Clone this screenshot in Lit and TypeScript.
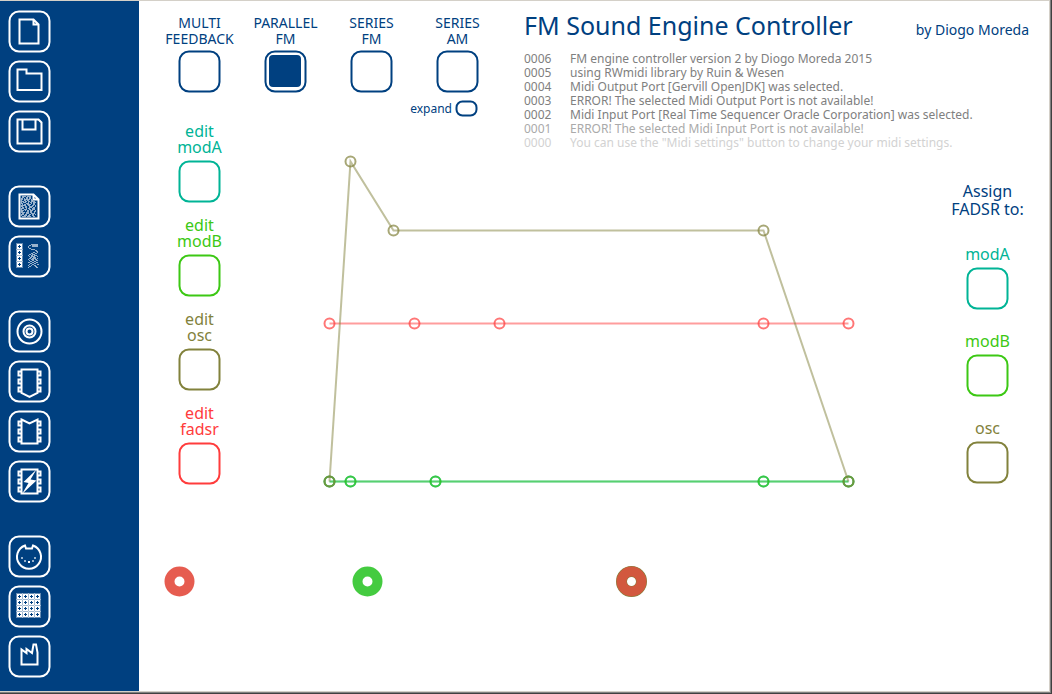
import { LitElement, html, svg, css, type TemplateResult, type SVGTemplateResult } from "lit";
import { customElement, property, state } from "lit/decorators.js";
import { classMap } from "lit/directives/class-map.js";

type Glyph = SVGTemplateResult | SVGTemplateResult[];

const pins = [11.5, 19.5, 27.5].map(
  (y) => svg`<path d="M13.5 ${y}H10.5v4h3M29.5 ${y}h3v4h-3" />`
);

const padCell = (x: number, y: number) =>
  svg`<path class="solid" fill-rule="evenodd"
    d="M${x} ${y}h5v5h-5zM${x + 2} ${y + 1}v1h-1v1h1v1h1v-1h1v-1h-1v-1z" />
    <rect class="seam" x=${x - 0.5} y=${y - 0.5} width="6" height="6" />`;

const bitmap = (rows: string[], x: number, y: number) =>
  rows.flatMap((row, r) =>
    [...row].map((c, i) =>
      c === "#" ? svg`<rect class="bit" x=${x + i} y=${y + r} width="1" height="1" />` : svg``
    )
  );

const noiseRows = [
  ".####.####.....",
  ".##..##.##.....",
  "##.#.##.##.....",
  "##.######.#....",
  "#..##.##..##...",
  "###.##.##.####.",
  "#.###..#.##.###",
  "##...###..#.##.",
  ".#.##.####..##.",
  "#####..##..##.#",
  "##..##..####..#",
  ".##.##..###.##.",
  "###..#.##..###.",
  "#..###..##.###.",
  "###.#.##.###..#",
  "##....##.##..##",
  "####.###.##..#.",
  ".##..###..####.",
  "###.##..##.##.#",
  "#..###.##..##..",
  ".####.####..##.",
];

const waveRows = [
  "...#######.",
  ".##.######.",
  "#...######.",
  "#..........",
  ".##........",
  "...####....",
  ".......##..",
  "........##.",
  ".....##..#.",
  "...##..##..",
  ".##.###....",
  "#..##.###..",
  ".#.####..#.",
  "..##.###...",
  ".##.####.#.",
  "#..###.##..",
  ".#..##..##.",
  "..##..##...",
  "##..##..##.",
  "..##..##...",
  ".#..##...##",
  "#..#..##...",
  ".##....##..",
  "#.......##.",
];

const sheet = svg`<path d="M11.5 9.5H25.5L30.5 14.5V33.5H11.5ZM25.5 9.5V14.5H30.5" />`;

const glyphs: Record<string, Glyph> = {
  blank: svg``,
  sheet,
  folder: svg`<path d="M9.5 30V9.5H18.5V13.5H33.5V30Z" />`,
  floppy: svg`<path d="M9.5 9.5H30.5L33.5 12.5V33.5H9.5ZM14.5 9.5V19.5H27.5V9.5" />`,
  random: [sheet, ...bitmap(noiseRows, 13, 11)],
  randomPads: [...[0, 1, 2, 3].map((i) => padCell(9, 9 + i * 6)), ...bitmap(waveRows, 20, 9)],
  disc: svg`<circle cx="21.5" cy="21.5" r="12" /><circle cx="21.5" cy="21.5" r="6" /><circle cx="21.5" cy="21.5" r="3" />`,
  chipIn: [svg`<path d="M13.5 9.5H29.5V33L21.5 37L13.5 33Z" />`, ...pins],
  chipOut: [svg`<path d="M13.5 9.5L21.5 13.5L29.5 9.5V33.5H13.5Z" />`, ...pins],
  chipBolt: [
    svg`<path d="M13.5 9.5H29.5V33.5H13.5Z" />
      <path class="solid" d="M28.5 9.5L15.5 22L20.5 23L14 34L28.5 20.5L22.5 19.5Z" />`,
    ...pins,
  ],
  din: svg`<path d="M17 10.5A12 12 0 1 0 25 10.5L24 13.5H18Z" />
    ${[[13, 22], [16, 25], [20, 26], [24, 25], [26, 22]].map(
      ([x, y]) => svg`<rect class=${x === 20 ? "solid" : "bit"} x=${x} y=${y} width="2" height="2" />`
    )}`,
  pads: [0, 1, 2, 3].flatMap((r) => [0, 1, 2, 3].map((c) => padCell(9 + c * 6, 9 + r * 6))),
  factory: svg`<path d="M13.5 29.5V14.5L18.5 18V14L24 18L25.5 9.5H28L29.5 17.5V29.5Z" />`,
};

@customElement("key-button")
export class KeyButton extends LitElement {
  static styles = css`
    :host { display: block; color: inherit; }
    button {
      display: block;
      padding: 0;
      border: 0;
      background: none;
      color: inherit;
      cursor: pointer;
    }
    svg { display: block; fill: none; stroke: currentColor; stroke-width: 2; }
    .solid { fill: currentColor; stroke: none; }
    .bit { fill: currentColor; stroke: none; opacity: 0.6; }
    .seam { stroke-width: 1; opacity: 0.4; }
  `;
  @property() glyph = "blank";
  @property() name = "";
  @property({ type: Boolean }) on = false;
  @property({ type: Boolean }) small = false;

  render() {
    const body = this.small
      ? html`<svg width="23" height="17" aria-hidden="true">
          <rect x="1.5" y="1.5" width="20" height="14" rx="6" />
          ${this.on ? svg`<rect class="solid" x="5" y="5" width="13" height="7" rx="3" />` : ""}
        </svg>`
      : html`<svg width="43" height="43" aria-hidden="true">
          <rect x="1.5" y="1.5" width="40" height="40" rx="9.5" />
          ${this.on ? svg`<rect class="solid" x="5" y="5" width="32" height="32" rx="4" />` : ""}
          ${glyphs[this.glyph]}
        </svg>`;
    return html`<button type="button" aria-label=${this.name} aria-pressed=${this.on}>${body}</button>`;
  }
}

interface Envelope {
  name: string;
  points: [number, number][];
}

const envelopes: Envelope[] = [
  { name: "fadsr", points: [[87.5, 173.5], [172.5, 173.5], [257.5, 173.5], [521.5, 173.5], [606.5, 173.5]] },
  { name: "modA", points: [[87.5, 331.5], [108.5, 331.5], [193.5, 331.5], [521.5, 331.5], [606.5, 331.5]] },
  { name: "modB", points: [[87.5, 331.5], [108.5, 331.5], [193.5, 331.5], [521.5, 331.5], [606.5, 331.5]] },
  { name: "osc", points: [[87.5, 331.5], [108.5, 11.5], [151.5, 80.5], [521.5, 80.5], [606.5, 331.5]] },
];

@customElement("envelope-editor")
export class EnvelopeEditor extends LitElement {
  static styles = css`
    :host { display: block; }
    svg { display: block; width: 100%; height: auto; }
    g { fill: none; stroke: currentColor; stroke-width: 2; }
    polyline { opacity: 0.5; }
    circle { opacity: 0.7; }
    .fadsr { color: #ff3c3c; }
    .modA { color: #00b496; }
    .modB { color: #32c814; }
    .osc { color: #82823c; }
  `;
  render() {
    return html`<svg viewBox="0 0 684 349" role="img" aria-label="Envelopes">
      ${envelopes.map(
        (e) => svg`<g class=${e.name}>
          <polyline points=${e.points.map((p) => p.join(",")).join(" ")} />
          ${e.points.map(([x, y]) => svg`<circle cx=${x} cy=${y} r="5" />`)}
        </g>`
      )}
    </svg>`;
  }
}

const toolGroups: [string, string][][] = [
  [["sheet", "New"], ["folder", "Open"], ["floppy", "Save"]],
  [["random", "Randomize patch"], ["randomPads", "Randomize controls"]],
  [["disc", "Record"], ["chipIn", "Read from chip"], ["chipOut", "Write to chip"], ["chipBolt", "Live chip"]],
  [["din", "Midi settings"], ["pads", "Pad settings"], ["factory", "Factory reset"]],
];

const algorithms: [string, string][] = [
  ["MULTI", "FEEDBACK"],
  ["PARALLEL", "FM"],
  ["SERIES", "FM"],
  ["SERIES", "AM"],
];

const log = [
  "FM engine controller version 2 by Diogo Moreda 2015",
  "using RWmidi library by Ruin & Wesen",
  "Midi Output Port [Gervill OpenJDK] was selected.",
  "ERROR! The selected Midi Output Port is not available!",
  "Midi Input Port [Real Time Sequencer Oracle Corporation] was selected.",
  "ERROR! The selected Midi Input Port is not available!",
  'You can use the "Midi settings" button to change your midi settings.',
];

@customElement("app-root")
export class AppRoot extends LitElement {
  static styles = css`
    :host {
      display: grid;
      box-sizing: border-box;
      min-height: 100vh;
      border: solid #404040;
      border-width: 0 1px 1px 0;
      font-family: "Noto Sans", "Open Sans", sans-serif;
      color: #004080;
      background: #fff;
    }
    .edge {
      display: grid;
      border: solid #808080;
      border-width: 0 1px 1px 0;
    }
    .window {
      display: grid;
      grid-template-columns: 139px 1fr;
      border: solid #d4d0c8;
      border-width: 1px 1px 1px 0;
    }
    .tools {
      display: flex;
      flex-direction: column;
      gap: 32px;
      padding: 9px 8px;
      background: #004080;
      color: #fff;
    }
    .group { display: flex; flex-direction: column; gap: 7px; }
    .main {
      display: grid;
      grid-template-columns: 103px 258px 1fr 123px;
      grid-template-rows: auto 33px auto auto 1fr;
    }
    .algos { grid-area: 1 / 1 / 2 / 4; justify-self: start; padding: 14px 0 0 18px; }
    .row { display: flex; gap: 1px; }
    .item {
      display: flex;
      flex-direction: column;
      align-items: center;
      text-align: center;
      white-space: pre;
    }
    .algo { width: 85px; gap: 3px; font-size: 14px; line-height: 16px; }
    .expand {
      display: flex;
      justify-content: flex-end;
      align-items: center;
      gap: 3px;
      padding-right: 22px;
      margin-top: 7px;
      font-size: 12px;
      line-height: 17px;
    }
    .info { grid-area: 1 / 3 / 3 / 5; padding: 8px 20px 0 24px; }
    .heading { display: flex; justify-content: space-between; align-items: baseline; white-space: nowrap; }
    h1 { margin: 0; font-size: 25px; line-height: 32px; font-weight: 400; }
    .author { font-size: 14px; }
    .log {
      margin: 11px 0 0;
      padding: 0;
      list-style: none;
      font-size: 12px;
      line-height: 14px;
      color: #808080;
      white-space: nowrap;
    }
    .entry { display: grid; grid-template-columns: 46px 1fr; }
    .fading { color: #aaa; }
    .faded { color: #d2d2d2; }
    .edits {
      grid-area: 2 / 1 / 4 / 2;
      display: flex;
      flex-direction: column;
      gap: 14px;
      padding: 6px 0 0 18px;
    }
    .edit { gap: 5px; font-size: 16px; line-height: 16px; }
    .canvas { grid-area: 3 / 2 / 4 / 4; }
    .assign {
      grid-area: 3 / 4 / 4 / 5;
      display: flex;
      flex-direction: column;
      gap: 22px;
      padding-top: 32px;
      font-size: 16px;
      line-height: 18px;
    }
    h2 { margin: 0 0 5px; font-size: 16px; line-height: 18px; font-weight: 400; text-align: center; white-space: pre; }
    .target { gap: 4px; }
    .modA { color: #00b496; }
    .modB { color: #3cc814; }
    .osc { color: #82823c; }
    .fadsr { color: #ff3c3c; }
    .knobs {
      grid-area: 4 / 1 / 5 / 5;
      display: grid;
      grid-template-columns: 188px 264px 1fr;
      padding: 67px 0 0 25px;
    }
    .knob {
      display: block;
      width: 31px;
      height: 31px;
      padding: 0;
      border: 0;
      background: none;
      cursor: pointer;
    }
    .knob svg { display: block; fill: none; stroke: currentColor; stroke-width: 10; }
    .k0 { color: #e65c50; }
    .k1 { color: #44cb40; }
    .k2 { color: #d2583e; }
    .rim { stroke: #82823c; stroke-width: 11; }
  `;

  @state() private algorithm = 1;
  @state() private expanded = false;

  private item(cls: string, text: string, name: string, on = false, click?: () => void): TemplateResult {
    return html`<div class="item ${cls}" @click=${click}>
      <span>${text}</span><key-button .name=${name} ?on=${on}></key-button>
    </div>`;
  }

  render() {
    return html`<div class="edge"><div class="window">
      <nav class="tools" aria-label="Tools">
        ${toolGroups.map(
          (g) => html`<div class="group">
            ${g.map(([glyph, name]) => html`<key-button .glyph=${glyph} .name=${name}></key-button>`)}
          </div>`
        )}
      </nav>
      <main class="main">
        <section class="algos">
          <div class="row">
            ${algorithms.map((a, i) =>
              this.item("algo", a.join("\n"), a.join(" "), i === this.algorithm, () => (this.algorithm = i))
            )}
          </div>
          <div class="expand">
            <span>expand</span>
            <key-button small name="expand" ?on=${this.expanded}
              @click=${() => (this.expanded = !this.expanded)}></key-button>
          </div>
        </section>
        <section class="info">
          <header class="heading">
            <h1>FM Sound Engine Controller</h1>
            <span class="author">by Diogo Moreda</span>
          </header>
          <ul class="log">
            ${log.map(
              (text, i) => html`<li class=${classMap({ entry: true, fading: i === 5, faded: i === 6 })}>
                <span>${String(log.length - 1 - i).padStart(4, "0")}</span><span>${text}</span>
              </li>`
            )}
          </ul>
        </section>
        <section class="edits">
          ${["modA", "modB", "osc", "fadsr"].map((n) => this.item(`edit ${n}`, `edit\n${n}`, `edit ${n}`))}
        </section>
        <envelope-editor class="canvas"></envelope-editor>
        <section class="assign">
          <h2>${"Assign\nFADSR to:"}</h2>
          ${["modA", "modB", "osc"].map((n) => this.item(`target ${n}`, n, `Assign FADSR to ${n}`))}
        </section>
        <section class="knobs">
          ${["Level A", "Level B", "Level C"].map(
            (name, i) => html`<button class="knob k${i}" type="button" aria-label=${name}>
              <svg width="31" height="31" aria-hidden="true">
                ${i === 2 ? svg`<circle class="rim" cx="15.5" cy="15.5" r="10" />` : ""}
                <circle cx="15.5" cy="15.5" r="10" />
              </svg>
            </button>`
          )}
        </section>
      </main>
    </div></div>`;
  }
}
